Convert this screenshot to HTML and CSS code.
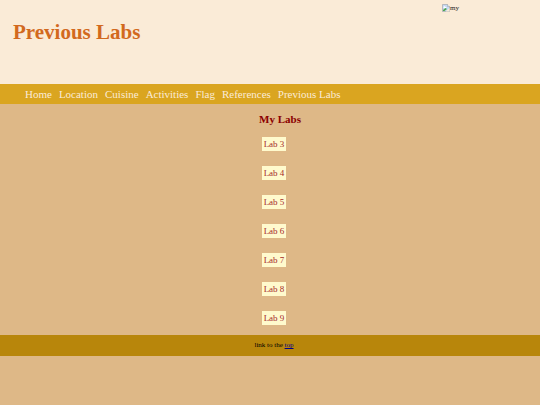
FILE: index.html
```html
<!DOCTYPE html>
<html lang="en">

<head>
    <meta charset="UTF-8">
    <meta name="viewport" content="width=device-width, initial-scale=1.0">
    <title>Previous Labs</title>
    <link rel="stylesheet" href="styles.css">
</head>

<body>
    <header class="header" id="top">
        <h1>Previous Labs</h1>
        <div class="picture">
            <svg width="8" height="8" viewBox="0 0 16 16" aria-hidden="true">
                <path d="M1 1h10l4 4v10H1z" fill="#c4d8f4" stroke="#8a9096" />
                <path d="M11 1v4h4" fill="#fff" stroke="#8a9096" />
                <path d="M3 7a2 2 0 0 1 4-1 2 2 0 0 1 2 2H3z" fill="#fff" />
                <path d="M2 14V12l5-4 3 2-5 4z" fill="#4ca64c" />
                <path d="M7 15l8-7v7z" fill="#faebd7" />
            </svg><span>my</span>
        </div>
    </header>
    <nav class="nav">
        <a href="#">Home</a>
        <a href="#">Location</a>
        <a href="#">Cuisine</a>
        <a href="#">Activities</a>
        <a href="#">Flag</a>
        <a href="#">References</a>
        <a href="#">Previous Labs</a>
    </nav>
    <main class="main">
        <h2>My Labs</h2>
        <ul class="labs">
            <li><a href="#">Lab 3</a></li>
            <li><a href="#">Lab 4</a></li>
            <li><a href="#">Lab 5</a></li>
            <li><a href="#">Lab 6</a></li>
            <li><a href="#">Lab 7</a></li>
            <li><a href="#">Lab 8</a></li>
            <li><a href="#">Lab 9</a></li>
        </ul>
    </main>
    <footer class="footer">
        <p>link to the <a href="#top">top</a></p>
    </footer>
</body>

</html>
```

FILE: styles.css
```css
* {
    box-sizing: border-box;
}

body {
    margin: 0;
    background-color: burlywood;
    font-family: "Liberation Serif", "Times New Roman", serif;
}

.header {
    display: flex;
    justify-content: space-between;
    padding: 4px 81px 24px 13px;
    background-color: antiquewhite;
}

.header h1 {
    margin: 16px 0;
    font-size: 21px;
    line-height: 24px;
    color: chocolate;
}

.picture {
    display: flex;
    align-items: flex-start;
    font-size: 7px;
    line-height: 8px;
    color: #222;
}

.nav {
    display: flex;
    flex-wrap: wrap;
    gap: 7px;
    padding: 4px 25px;
    background-color: goldenrod;
    font-size: 11px;
    line-height: 12px;
}

.nav a {
    color: antiquewhite;
    text-decoration: none;
}

.main {
    padding: 8px 0 10px 8px;
}

.main h2 {
    margin: 0 0 11px 12px;
    font-size: 11px;
    line-height: 14px;
    text-align: center;
    color: darkred;
}

.labs {
    display: flex;
    flex-direction: column;
    align-items: center;
    gap: 15px;
    margin: 0;
    padding: 0;
    list-style: none;
    font-size: 9px;
    line-height: 14px;
}

.labs a {
    display: block;
    padding: 0 2px;
    background-color: lemonchiffon;
    color: brown;
    text-decoration: none;
}

.footer {
    padding: 4px 0 4px 8px;
    background-color: darkgoldenrod;
    font-size: 7px;
    line-height: 13px;
    text-align: center;
}

.footer p {
    margin: 0;
}

.footer a {
    color: #00008b;
}
```
